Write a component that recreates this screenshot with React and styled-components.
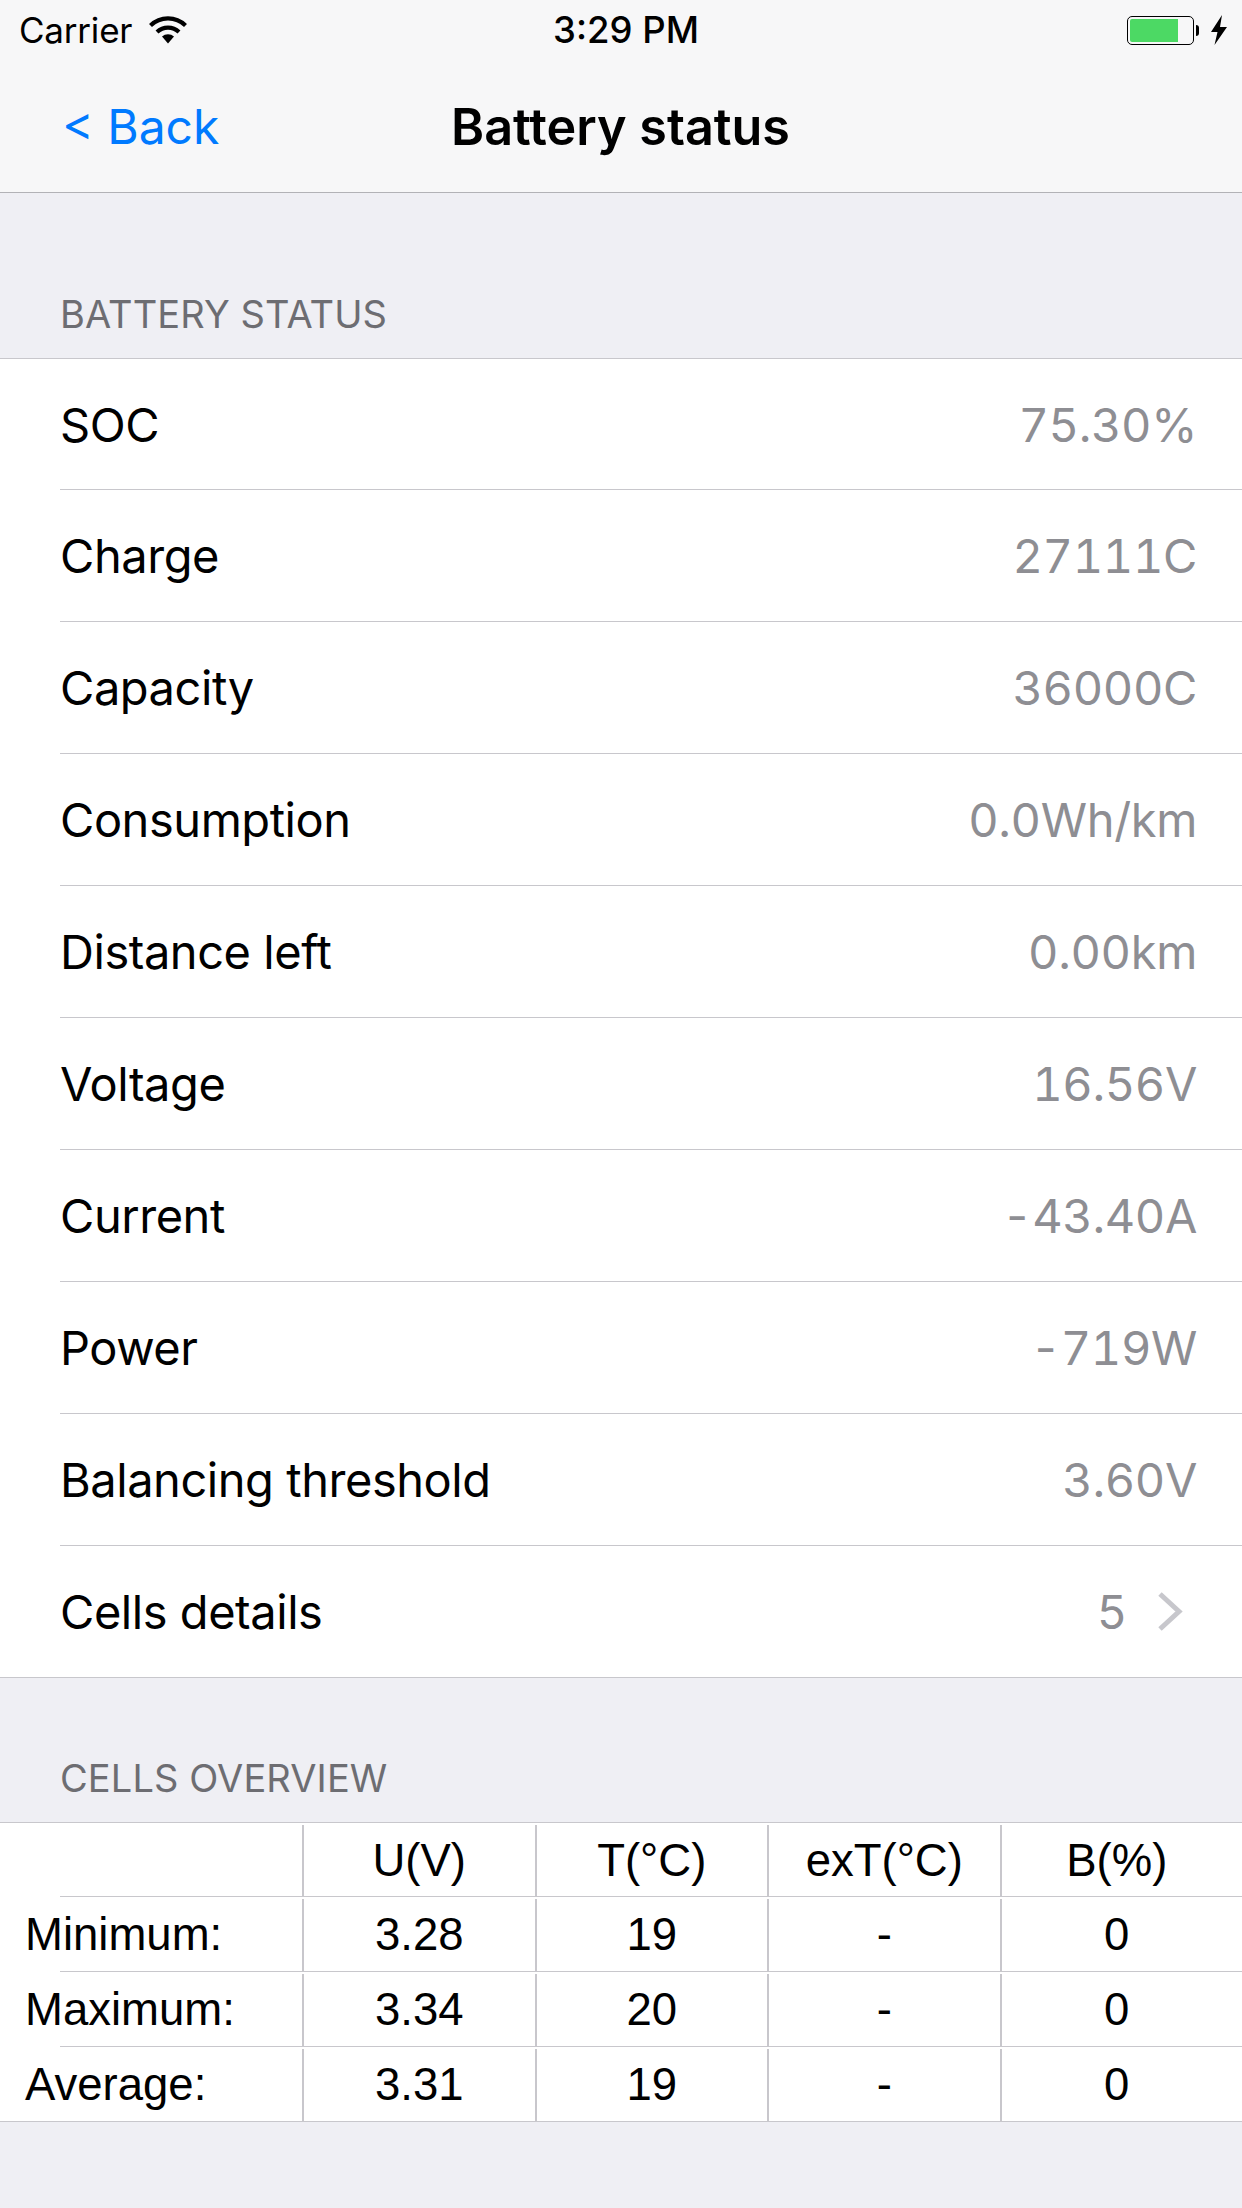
import React from 'react';
import styled, { createGlobalStyle } from 'styled-components';

const GlobalStyle = createGlobalStyle`
  html, body {
    margin: 0;
    padding: 0;
    background: #efeff4;
  }
  body {
    font-family: Inter, "Noto Sans", sans-serif;
    -webkit-font-smoothing: antialiased;
  }
`;

const Page = styled.div`
  width: 1242px;
  height: 2208px;
  overflow: hidden;
  background: #efeff4;
`;

const TopBar = styled.header`
  height: 192px;
  background: #f7f7f8;
  border-bottom: 1px solid #b2b2b6;
`;

const StatusBar = styled.div`
  height: 60px;
  padding: 0 15px 0 19px;
  display: grid;
  grid-template-columns: 1fr auto 1fr;
  align-items: center;
  font-size: 35px;
  color: #000;
`;

const StatusLeft = styled.div`
  display: flex;
  align-items: center;
  gap: 17px;
  letter-spacing: -0.2px;
`;

const StatusTime = styled.div`
  font-size: 36.5px;
  font-weight: 500;
  padding-left: 6px;
`;

const StatusRight = styled.div`
  display: flex;
  align-items: center;
  justify-content: flex-end;
  gap: 12px;
`;

const BatteryShell = styled.div`
  box-sizing: border-box;
  width: 67px;
  height: 29px;
  padding: 2px;
  border: 1.5px solid #000;
  border-radius: 5px;
  display: flex;
`;

const BatteryFill = styled.div`
  width: 78%;
  background: #4cd964;
  border-radius: 2px 0 0 2px;
`;

const BatteryGroup = styled.div`
  display: flex;
  align-items: center;
`;

const BatteryNub = styled.div`
  width: 3px;
  height: 11px;
  margin-left: 2px;
  background: #000;
  border-radius: 0 3px 3px 0;
`;

const NavBar = styled.nav`
  height: 132px;
  padding: 0 63px 0 62px;
  display: grid;
  grid-template-columns: 1fr auto 1fr;
  align-items: center;
`;

const BackLink = styled.a`
  color: #007aff;
  font-size: 48px;
`;

const NavTitle = styled.h1`
  margin: 0;
  font-size: 50.3px;
  font-weight: 600;
  color: #000;
`;

const SectionHeader = styled.div`
  box-sizing: border-box;
  height: ${props => props.$height}px;
  padding: 0 60px 21px;
  display: flex;
  align-items: flex-end;
  font-size: 38px;
  letter-spacing: 0.1px;
  line-height: 45px;
  color: #6d6d72;
`;

const List = styled.section`
  background: #fff;
  border-top: 1px solid #c8c7cc;
  border-bottom: 1px solid #c8c7cc;
`;

const Row = styled.div`
  padding-left: 60px;
`;

const RowInner = styled.div`
  box-sizing: border-box;
  height: 132px;
  padding-right: 45px;
  display: flex;
  align-items: center;
  justify-content: space-between;
  border-bottom: 1px solid #c8c7cc;
  font-size: 47px;
  letter-spacing: -0.45px;
  color: #000;

  ${Row}:first-child & {
    height: 131px;
  }

  ${Row}:last-child & {
    height: 131px;
    border-bottom: none;
  }
`;

const RowValue = styled.span`
  color: #8e8e93;
  display: flex;
  align-items: center;
  font-variant-numeric: tabular-nums;
  letter-spacing: -0.35px;
`;

const Chevron = styled.svg`
  width: 26px;
  height: 41px;
  margin-left: 30px;
  margin-right: 14px;
`;

const Table = styled.section`
  background: #fff;
  border-top: 1px solid #c8c7cc;
  border-bottom: 1px solid #c8c7cc;
  font-family: "Liberation Sans", Arial, sans-serif;
  font-size: 45.5px;
  color: #000;
`;

const TableRow = styled.div`
  display: grid;
  grid-template-columns: 302px repeat(4, 232.5px);
  height: 72px;
  padding-top: 2px;

  &:first-child {
    height: 71px;
  }
`;

const RowRule = styled.div`
  height: 1px;
  margin-left: 60px;
  background: #c8c7cc;
`;

const LabelCell = styled.div`
  display: flex;
  align-items: center;
  padding-left: 25px;
  white-space: nowrap;
`;

const ValueCell = styled.div`
  display: flex;
  align-items: center;
  justify-content: center;
  border-left: 2px solid #c8c7cc;
`;

const WifiIcon = () => (
  <svg width="38" height="28" viewBox="0 0 38 28">
    <path d="M1.5 9.5 A25 25 0 0 1 36.5 9.5" fill="none" stroke="#000" strokeWidth="4.2" />
    <path d="M8 16 A16 16 0 0 1 30 16" fill="none" stroke="#000" strokeWidth="4.2" />
    <path d="M13 20.5 A9 9 0 0 1 25 20.5 L19 27.5 Z" fill="#000" />
  </svg>
);

const BoltIcon = () => (
  <svg width="16" height="30" viewBox="0 0 16 30">
    <path d="M11 0 L0 17 L6.5 17 L3.5 30 L16 12 L9 12 Z" fill="#000" />
  </svg>
);

const statusRows = [
  ['SOC', '75.30%'],
  ['Charge', '27111C'],
  ['Capacity', '36000C'],
  ['Consumption', '0.0Wh/km'],
  ['Distance left', '0.00km'],
  ['Voltage', '16.56V'],
  ['Current', '-43.40A'],
  ['Power', '-719W'],
  ['Balancing threshold', '3.60V'],
];

const cellRows = [
  ['', 'U(V)', 'T(°C)', 'exT(°C)', 'B(%)'],
  ['Minimum:', '3.28', '19', '-', '0'],
  ['Maximum:', '3.34', '20', '-', '0'],
  ['Average:', '3.31', '19', '-', '0'],
];

const App = () => (
  <Page>
    <GlobalStyle />
    <TopBar>
      <StatusBar>
        <StatusLeft>
          <span>Carrier</span>
          <WifiIcon />
        </StatusLeft>
        <StatusTime>3:29 PM</StatusTime>
        <StatusRight>
          <BatteryGroup>
            <BatteryShell>
              <BatteryFill />
            </BatteryShell>
            <BatteryNub />
          </BatteryGroup>
          <BoltIcon />
        </StatusRight>
      </StatusBar>
      <NavBar>
        <BackLink>&lt; Back</BackLink>
        <NavTitle>Battery status</NavTitle>
        <span />
      </NavBar>
    </TopBar>

    <SectionHeader $height={165}>BATTERY STATUS</SectionHeader>
    <List>
      {statusRows.map(([label, value]) => (
        <Row key={label}>
          <RowInner>
            <span>{label}</span>
            <RowValue>{value}</RowValue>
          </RowInner>
        </Row>
      ))}
      <Row>
        <RowInner>
          <span>Cells details</span>
          <RowValue>
            5
            <Chevron viewBox="0 0 26 41">
              <path d="M3 3 L22 20.5 L3 38" fill="none" stroke="#c7c7cc" strokeWidth="5" />
            </Chevron>
          </RowValue>
        </RowInner>
      </Row>
    </List>

    <SectionHeader $height={144}>CELLS OVERVIEW</SectionHeader>
    <Table>
      {cellRows.map((row, i) => (
        <React.Fragment key={i}>
          <TableRow>
            <LabelCell>{row[0]}</LabelCell>
            {row.slice(1).map((cell, j) => (
              <ValueCell key={j}>{cell}</ValueCell>
            ))}
          </TableRow>
          {i < cellRows.length - 1 && <RowRule />}
        </React.Fragment>
      ))}
    </Table>
  </Page>
);

export default App;
